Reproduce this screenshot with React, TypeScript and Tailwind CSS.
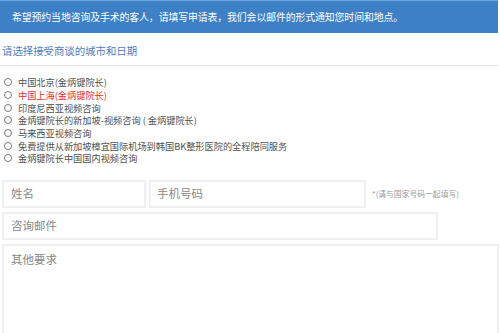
import React from "react";

const options = [
  { t: "中国北京(金炳键院长)", red: false },
  { t: "中国上海(金炳键院长)", red: true },
  { t: "印度尼西亚视频咨询", red: false },
  { t: "金炳键院长的新加坡-视频咨询 ( 金炳键院长)", red: false },
  { t: "马来西亚视频咨询", red: false },
  { t: "免费提供从新加坡樟宜国际机场到韩国BK整形医院的全程陪同服务", red: false },
  { t: "金炳键院长中国国内视频咨询", red: false },
];

export default function App() {
  return (
    <div
      className="w-[500px] h-[333px] overflow-hidden bg-white"
      style={{ fontFamily: '"Noto Sans CJK SC", "Noto Sans", sans-serif' }}
    >
      <div className="w-[498px] h-[33px] bg-[#3d80c6] border-t border-[#6fa2d8] flex items-center pl-[12px] text-white text-[9.9px] tracking-[-0.1px]">
        希望预约当地咨询及手术的客人，请填写申请表，我们会以邮件的形式通知您时间和地点。
      </div>
      <div className="pl-[2px] pt-[11px] h-[32px] text-[10.4px] text-[#4a80c4] leading-[14px]">
        请选择接受商谈的城市和日期
      </div>
      <div className="w-[498px] h-px bg-[#e2e2e2]" />
      <div className="pt-[10px] pl-[4px] flex flex-col">
        {options.map((o, i) => (
          <div key={i} className="flex items-center h-[12.7px]">
            <span className="w-[8px] h-[8px] rounded-full border border-[#777] bg-white mr-[6px]" />
            <span className={"text-[9.2px] leading-[12px] " + (o.red ? "text-[#e0302a]" : "text-[#4f4f4f]")}>
              {o.t}
            </span>
          </div>
        ))}
      </div>
      <div className="pl-[2px] pt-[15px] flex flex-col gap-[4px]">
        <div className="flex items-center gap-[3px]">
          <div className="w-[144px] h-[28px] border-2 border-[#efefef] flex items-center pl-[7px] text-[11.5px] text-[#888]">
            姓名
          </div>
          <div className="w-[217px] h-[28px] border-2 border-[#efefef] flex items-center pl-[6px] text-[11.5px] text-[#888]">
            手机号码
          </div>
          <div className="pl-[3px] text-[7.8px] text-[#999]">*(请与国家号码一起填写)</div>
        </div>
        <div className="w-[436px] h-[28px] border-2 border-[#efefef] flex items-center pl-[7px] text-[11.5px] text-[#888]">
          咨询邮件
        </div>
        <div className="w-[497px] h-[100px] border-2 border-[#efefef] pl-[7px] pt-[5px] text-[11.5px] text-[#888]">
          其他要求
        </div>
      </div>
    </div>
  );
}
